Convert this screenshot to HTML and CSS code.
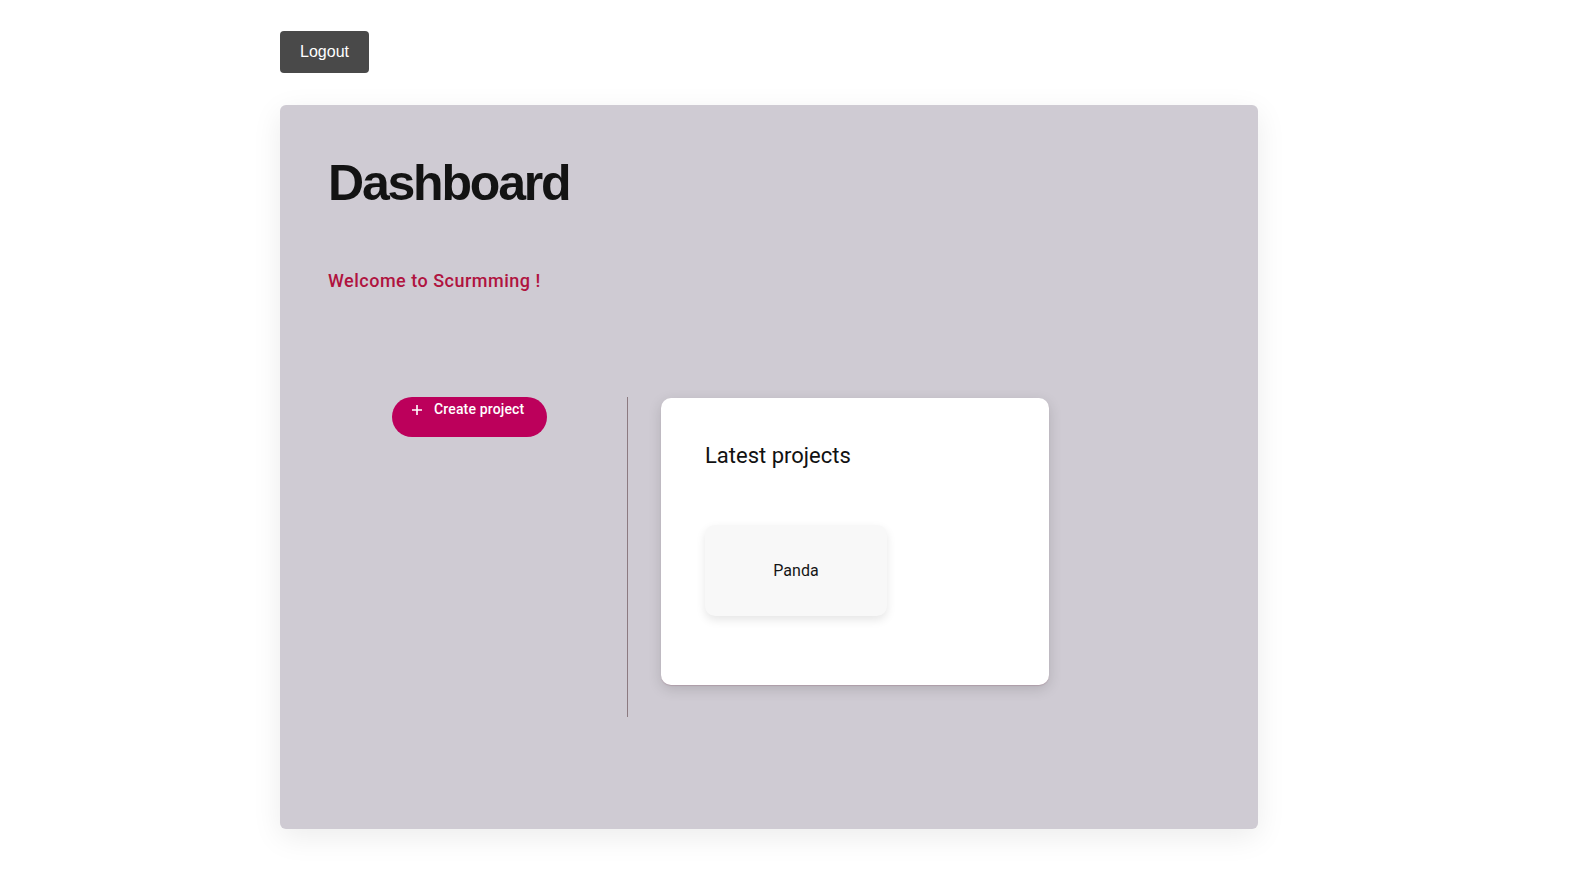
FILE: index.html
```html
<!DOCTYPE html>
<html lang="en">
<head>
<meta charset="utf-8">
<title>Dashboard</title>
<link rel="stylesheet" href="styles.css">
</head>
<body>
<div class="page">
  <button class="logout">Logout</button>
  <main class="panel">
    <h1 class="title">Dashboard</h1>
    <p class="welcome">Welcome to Scurmming !</p>
    <div class="row">
      <div class="left-col">
        <button class="create">
          <svg class="plus" width="10" height="10" viewBox="0 0 10 10"><path d="M5 0v10M0 5h10" stroke="#fff" stroke-width="1.6"/></svg>
          <span>Create project</span>
        </button>
      </div>
      <div class="divider"></div>
      <div class="right-col">
        <section class="card">
          <h2 class="card-title">Latest projects</h2>
          <div class="projects">
            <div class="project">Panda</div>
          </div>
        </section>
      </div>
    </div>
  </main>
</div>
</body>
</html>
```
FILE: styles.css
```css
html, body {
  margin: 0;
  padding: 0;
  background: #ffffff;
}

.page {
  padding: 31px 0 52px 280px;
  display: flex;
  flex-direction: column;
  align-items: flex-start;
}

.logout {
  width: 89px;
  height: 42px;
  background: #494949;
  color: #ffffff;
  border: none;
  border-radius: 4px;
  font-family: "Liberation Sans", Arial, sans-serif;
  font-size: 16px;
  padding: 0;
  cursor: pointer;
}

.panel {
  margin-top: 32px;
  width: 978px;
  height: 724px;
  box-sizing: border-box;
  background: #cfcbd3;
  border-radius: 6px;
  padding: 50px 48px;
  box-shadow: 0 8px 30px rgba(0, 0, 0, 0.08);
}

.title {
  margin: 0;
  font-family: "Liberation Sans", Arial, sans-serif;
  font-size: 50px;
  font-weight: 700;
  letter-spacing: -2.2px;
  color: #131313;
  line-height: 1.15;
  padding-left: 0;
}

.welcome {
  margin: 57px 0 0;
  font-family: Roboto, "Liberation Sans", sans-serif;
  font-weight: 500;
  font-size: 18px;
  letter-spacing: 0.5px;
  color: #b0133f;
}

.row {
  margin-top: 106px;
  display: flex;
  align-items: flex-start;
}

.left-col {
  width: 299px;
  padding-left: 64px;
  box-sizing: border-box;
}

.create {
  width: 155px;
  height: 40px;
  border: none;
  border-radius: 20px;
  background: #bc005b;
  color: #ffffff;
  font-family: Roboto, "Liberation Sans", sans-serif;
  font-weight: 500;
  font-size: 14px;
  letter-spacing: 0.15px;
  display: flex;
  align-items: flex-start;
  gap: 12px;
  padding: 4px 0 0 20px;
  box-sizing: border-box;
  cursor: pointer;
}

.plus {
  margin-top: 4px;
  flex: none;
}

.divider {
  width: 1px;
  height: 320px;
  background: #8c7a80;
}

.right-col {
  padding: 1px 0 0 33px;
}

.card {
  width: 388px;
  height: 287px;
  box-sizing: border-box;
  background: #ffffff;
  border-radius: 10px;
  padding: 45px 44px 0 44px;
  box-shadow: 0 4px 14px rgba(0, 0, 0, 0.14), 0 1px 1px rgba(150, 90, 110, 0.25);
}

.card-title {
  margin: 0;
  font-family: Roboto, "Liberation Sans", sans-serif;
  font-weight: 400;
  font-size: 22px;
  color: #111111;
}

.projects {
  margin-top: 57px;
  display: flex;
}

.project {
  width: 182px;
  height: 91px;
  background: #f8f8f8;
  border-radius: 10px;
  display: flex;
  align-items: center;
  justify-content: center;
  font-family: Roboto, "Liberation Sans", sans-serif;
  font-size: 16px;
  color: #151515;
  box-shadow: 0 4px 10px rgba(0, 0, 0, 0.1);
}
```
